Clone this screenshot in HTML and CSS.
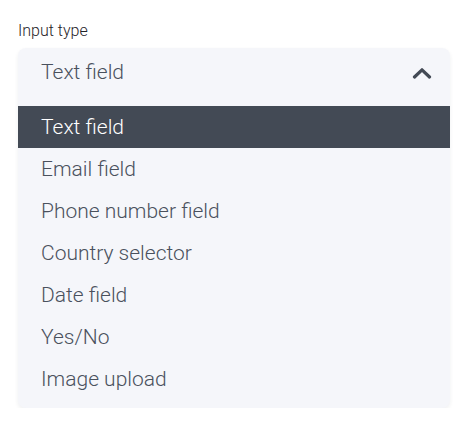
FILE: index.html
```html
<!DOCTYPE html>
<html>
<head>
<meta charset="utf-8">
<link rel="stylesheet" href="styles.css">
</head>
<body>
<div class="field">
  <div class="label">Input type</div>
  <div class="select">
    <div class="select-head">
      <span class="value">Text field</span>
      <svg class="chevron" width="20" height="12" viewBox="0 0 20 12"><polyline points="2.5,10 10,2.8 17.5,10" fill="none" stroke="#434a55" stroke-width="3.2" stroke-linecap="round" stroke-linejoin="round"/></svg>
    </div>
    <ul class="options">
      <li class="option selected">Text field</li>
      <li class="option">Email field</li>
      <li class="option">Phone number field</li>
      <li class="option">Country selector</li>
      <li class="option">Date field</li>
      <li class="option">Yes/No</li>
      <li class="option">Image upload</li>
    </ul>
  </div>
</div>
</body>
</html>
```
FILE: styles.css
```css
html, body {
  margin: 0;
  padding: 0;
  background: #ffffff;
}
body {
  font-family: Roboto, "Liberation Sans", sans-serif;
}
.field {
  padding: 21px 16px 0 18px;
}
.label {
  font-size: 16px;
  font-weight: 300;
  line-height: 20px;
  color: #1f2328;
  margin-bottom: 7px;
}
.select {
  background: #f5f6fa;
  border-radius: 8px;
  box-shadow: 0 2px 4px rgba(30, 40, 60, 0.07);
  overflow: hidden;
}
.select-head {
  height: 48px;
  display: flex;
  align-items: center;
  justify-content: space-between;
  padding: 0 18px 0 23px;
}
.value {
  font-size: 21px;
  font-weight: 300;
  color: #4a515d;
}
.chevron {
  display: block;
  margin-top: 2px;
}
.options {
  list-style: none;
  margin: 0;
  padding: 10px 0 8px 0;
}
.option {
  height: 42px;
  line-height: 42px;
  padding-left: 23px;
  font-size: 21px;
  font-weight: 300;
  color: #4a515d;
}
.option.selected {
  background: #434a55;
  color: #ffffff;
}
```
